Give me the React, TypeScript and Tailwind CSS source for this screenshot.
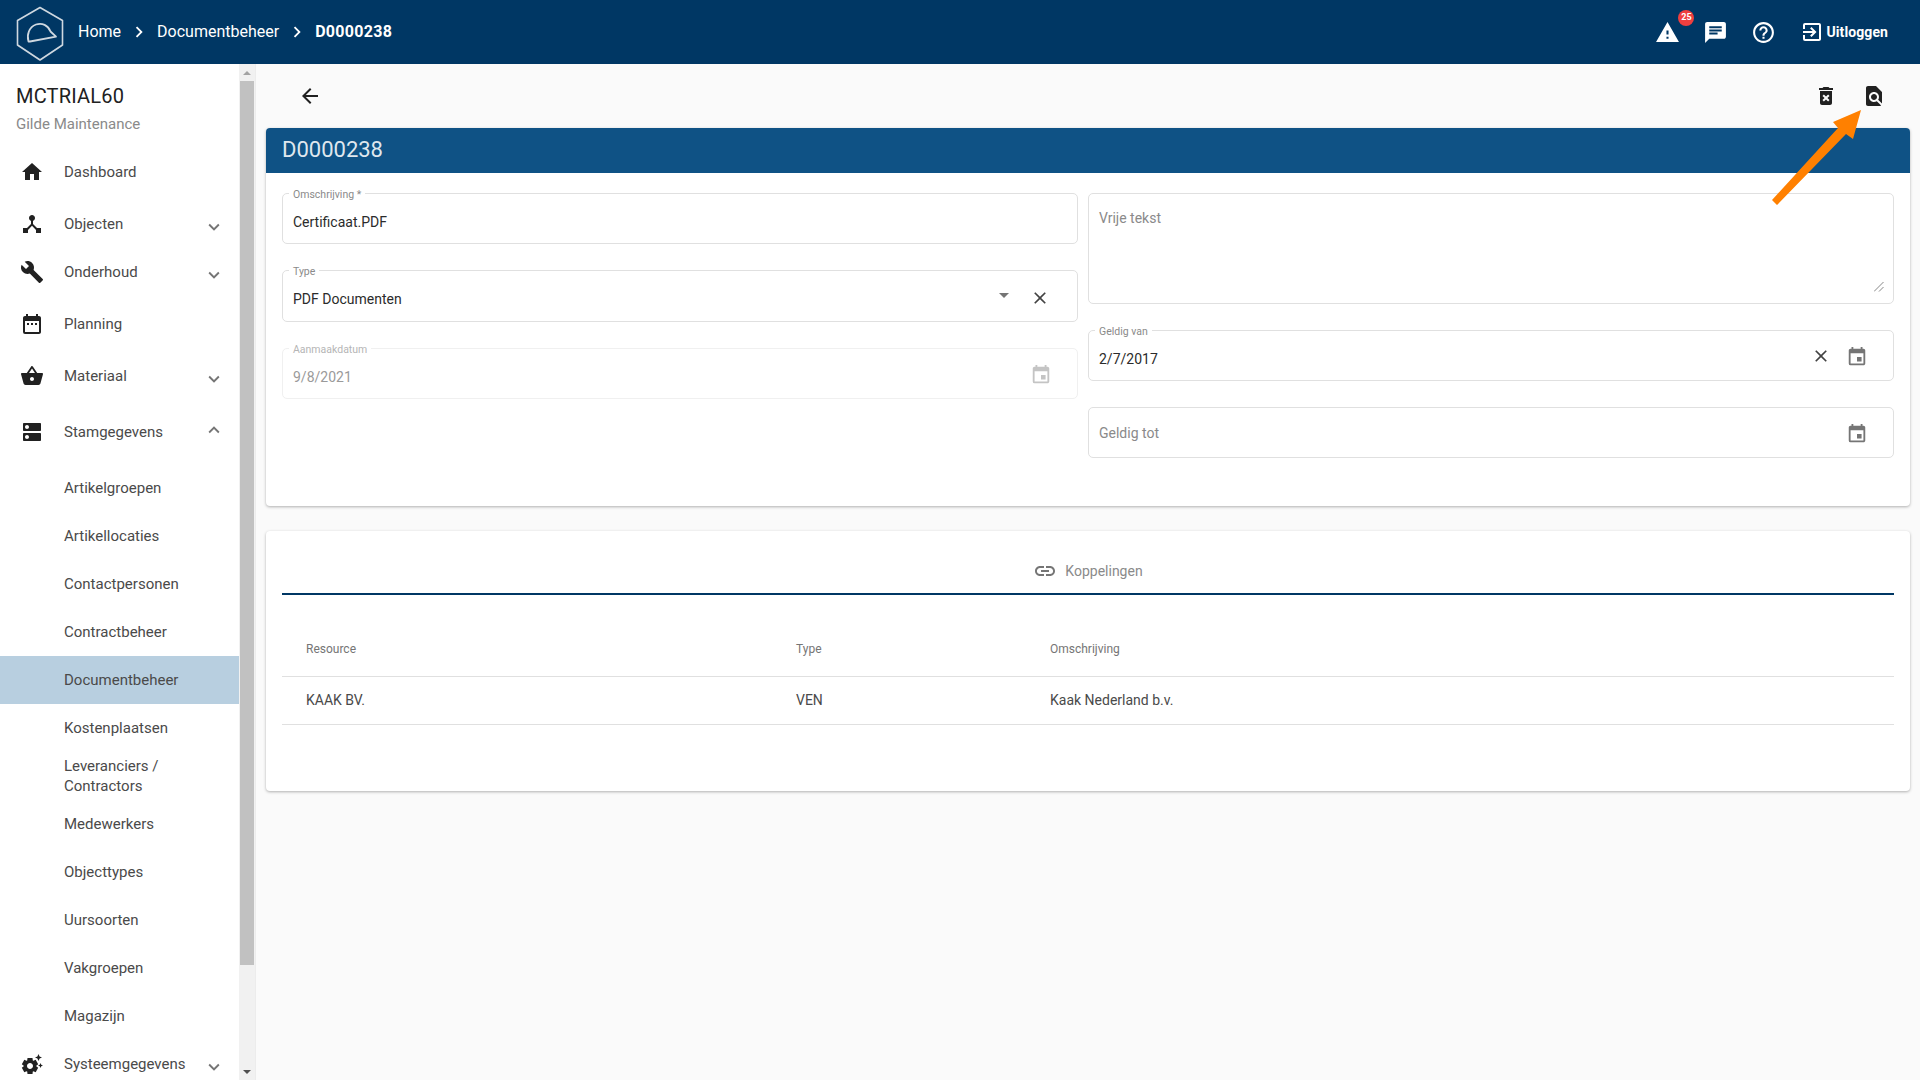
import type { ReactNode } from 'react';
import {
    MdArrowBack,
    MdArrowDropDown,
    MdBuild,
    MdChat,
    MdChevronRight,
    MdClose,
    MdDateRange,
    MdDeleteForever,
    MdDeviceHub,
    MdDns,
    MdEvent,
    MdExitToApp,
    MdExpandLess,
    MdExpandMore,
    MdFindInPage,
    MdHelpOutline,
    MdHome,
    MdLink,
    MdSettingsSuggest,
    MdShoppingBasket,
    MdWarning,
} from 'react-icons/md';

type NavRow = {
    label: ReactNode;
    icon?: ReactNode;
    height: string;
    chevron?: 'up' | 'down';
    active?: boolean;
};

const navRows: NavRow[] = [
    { label: 'Dashboard', icon: <MdHome />, height: 'h-[52px]' },
    { label: 'Objecten', icon: <MdDeviceHub />, height: 'h-[52px]', chevron: 'down' },
    { label: 'Onderhoud', icon: <MdBuild />, height: 'h-[44px]', chevron: 'down' },
    { label: 'Planning', icon: <MdDateRange />, height: 'h-[59px]' },
    { label: 'Materiaal', icon: <MdShoppingBasket />, height: 'h-[46px]', chevron: 'down' },
    { label: 'Stamgegevens', icon: <MdDns />, height: 'h-[65px]', chevron: 'up' },
    { label: 'Artikelgroepen', height: 'h-[48px]' },
    { label: 'Artikellocaties', height: 'h-[48px]' },
    { label: 'Contactpersonen', height: 'h-[48px]' },
    { label: 'Contractbeheer', height: 'h-[48px]' },
    { label: 'Documentbeheer', height: 'h-[48px]', active: true },
    { label: 'Kostenplaatsen', height: 'h-[48px]' },
    {
        label: (
            <>
                Leveranciers /<br />
                Contractors
            </>
        ),
        height: 'h-[48px]',
    },
    { label: 'Medewerkers', height: 'h-[48px]' },
    { label: 'Objecttypes', height: 'h-[48px]' },
    { label: 'Uursoorten', height: 'h-[48px]' },
    { label: 'Vakgroepen', height: 'h-[48px]' },
    { label: 'Magazijn', height: 'h-[48px]' },
    { label: 'Systeemgegevens', icon: <MdSettingsSuggest />, height: 'h-[48px]', chevron: 'down' },
];

function Logo() {
    return (
        <svg width="48" height="60" viewBox="0 0 48 60" fill="none" stroke="#cfd8e0" strokeWidth="1.6">
            <path d="M24 5.5 46.5 18.5V43L24 58 1.5 43V18.5Z" strokeLinejoin="round" />
            <path
                d="M12.5 39.5C10.5 33 13 25 20 22.5c6-2 12 .5 14.5 7l5.5 5.2-26 4.8Z"
                strokeWidth="1.8"
                strokeLinejoin="round"
            />
        </svg>
    );
}

function NavItem({ row }: { row: NavRow }) {
    return (
        <div
            className={`flex shrink-0 items-center text-[15px] leading-[20px] text-[#4a4a4a] ${row.height} ${
                row.active ? 'bg-[#b8cfe0]' : ''
            }`}
        >
            <span className="flex w-[64px] shrink-0 justify-center pr-[1px] text-[24px] text-[#212121]">{row.icon}</span>
            <span className="flex-1">{row.label}</span>
            {row.chevron && (
                <span
                    className={`mr-[14px] text-[22px] text-[#757575] ${row.chevron === 'up' ? 'mb-[4px]' : 'mt-[5px]'}`}
                >
                    {row.chevron === 'up' ? <MdExpandLess /> : <MdExpandMore />}
                </span>
            )}
        </div>
    );
}

function Sidebar() {
    return (
        <aside className="flex w-[256px] shrink-0 overflow-hidden border-r border-[#ececec] bg-white">
            <div className="flex h-[1016px] w-[239px] shrink-0 flex-col overflow-hidden">
                <div className="h-[82px] shrink-0 px-4 pt-[20px]">
                    <div className="text-[20px] leading-[24px] tracking-[0.2px] text-[#212121]">MCTRIAL60</div>
                    <div className="mt-[6px] text-[15px] leading-[20px] text-[#8a8a8a]">Gilde Maintenance</div>
                </div>
                {navRows.map((row, i) => (
                    <NavItem key={i} row={row} />
                ))}
            </div>
            <div className="flex w-[16px] shrink-0 flex-col items-center bg-[#f1f1f1]">
                <div className="flex h-[17px] items-center">
                    <div className="h-0 w-0 border-x-[4px] border-b-[4px] border-x-transparent border-b-[#a3a3a3]" />
                </div>
                <div className="h-[884px] w-[14px] bg-[#c1c1c1]" />
                <div className="flex-1" />
                <div className="flex h-[17px] items-center">
                    <div className="h-0 w-0 border-x-[4px] border-t-[4px] border-x-transparent border-t-[#505050]" />
                </div>
            </div>
        </aside>
    );
}

function Field({
    label,
    floating,
    value,
    disabled,
    className,
    children,
}: {
    label: string;
    floating?: boolean;
    value?: string;
    disabled?: boolean;
    className: string;
    children?: ReactNode;
}) {
    return (
        <div
            className={`relative flex items-center rounded-[5px] border pl-[10px] pr-[25px] text-[14px] ${className} ${
                disabled ? 'border-[#f0f0f0]' : 'border-[#e0e0e0]'
            }`}
        >
            {floating && (
                <span
                    className={`absolute top-[-6px] left-[6px] bg-white px-[4px] text-[10.5px] leading-[13px] ${
                        disabled ? 'text-[#b5b5b5]' : 'text-[#8a8a8a]'
                    }`}
                >
                    {label}
                </span>
            )}
            <span
                className={`flex-1 ${
                    !floating ? 'pt-[1px] text-[#8a8a8a]' : disabled ? 'pt-[7px] text-[#9a9a9a]' : 'pt-[7px] text-[#2b2b2b]'
                }`}
            >
                {floating ? value : label}
            </span>
            {children}
        </div>
    );
}

function Toolbar() {
    return (
        <div className="flex h-[64px] shrink-0 items-center pl-[32px] pr-[24px] text-[24px] text-[#212121]">
            <MdArrowBack />
            <div className="flex-1" />
            <MdDeleteForever />
            <span className="w-[24px]" />
            <MdFindInPage />
        </div>
    );
}

function DocumentCard() {
    return (
        <section className="h-[378px] shrink-0 rounded-[4px] bg-white shadow-[0_1px_3px_rgba(0,0,0,0.3)]">
            <h1 className="flex h-[45px] items-center rounded-t-[4px] bg-[#0f5285] px-4 pb-[2px] text-[22px] font-normal text-[#dfe7ee]">
                D0000238
            </h1>
            <div className="grid grid-cols-[796px_1fr] gap-x-[10px] px-4 pt-[20px]">
                <div className="flex flex-col gap-[26px]">
                    <Field label="Omschrijving *" floating value="Certificaat.PDF" className="h-[51px]" />
                    <Field label="Type" floating value="PDF Documenten" className="h-[52px]">
                        <MdArrowDropDown className="mr-[14px] mb-[2px] text-[24px] text-[#757575]" />
                        <MdClose className="mr-[2px] mt-[3px] text-[20px] text-[#424242]" />
                    </Field>
                    <Field label="Aanmaakdatum" floating value="9/8/2021" disabled className="h-[51px]">
                        <MdEvent className="mt-[2px] text-[22px] text-[#c4c4c4]" />
                    </Field>
                </div>
                <div className="flex flex-col gap-[26px]">
                    <div className="relative h-[111px] rounded-[5px] border border-[#e0e0e0] px-[10px] py-[14px] text-[14px] leading-[20px] text-[#8a8a8a]">
                        Vrije tekst
                        <svg className="absolute right-[9px] bottom-[11px]" width="10" height="10" viewBox="0 0 10 10" stroke="#555" strokeWidth="0.7">
                            <path d="M0 9.5 9.5 0M5 9.5 9.5 5" />
                        </svg>
                    </div>
                    <Field label="Geldig van" floating value="2/7/2017" className="h-[51px]">
                        <MdClose className="mr-[15px] mt-[1px] text-[20px] text-[#424242]" />
                        <MdEvent className="mt-[2px] text-[22px] text-[#757575]" />
                    </Field>
                    <Field label="Geldig tot" className="h-[51px]">
                        <MdEvent className="mt-[2px] text-[22px] text-[#757575]" />
                    </Field>
                </div>
            </div>
        </section>
    );
}

function LinksCard() {
    return (
        <section className="mt-[25px] h-[260px] shrink-0 rounded-[4px] bg-white px-4 pt-[16px] shadow-[0_1px_3px_rgba(0,0,0,0.3)]">
            <div className="flex h-[48px] items-center justify-center gap-[8px] border-b-2 border-[#003764] pt-[2px] text-[14px] text-[#8a8a8a]">
                <MdLink className="text-[24px] text-[#757575]" />
                Koppelingen
            </div>
            <div className="mt-[27px] grid h-[55px] grid-cols-[490px_254px_1fr] items-center border-b border-[#e0e0e0] px-[24px] text-[12px] text-[#757575]">
                <span>Resource</span>
                <span>Type</span>
                <span>Omschrijving</span>
            </div>
            <div className="grid h-[48px] grid-cols-[490px_254px_1fr] items-center border-b border-[#e0e0e0] px-[24px] text-[14px] text-[#4a4a4a]">
                <span>KAAK BV.</span>
                <span>VEN</span>
                <span>Kaak Nederland b.v.</span>
            </div>
        </section>
    );
}

export default function App() {
    return (
        <div className="relative flex h-[1080px] w-[1920px] flex-col overflow-hidden bg-[#fafafa] font-['Roboto',sans-serif]">
            <header className="flex h-[64px] shrink-0 items-center bg-[#003764] pl-[16px] pr-[32px] text-white">
                <Logo />
                <nav className="ml-[14px] flex items-center text-[16px]">
                    <span>Home</span>
                    <span className="flex w-[36px] justify-center text-[22px]">
                        <MdChevronRight />
                    </span>
                    <span>Documentbeheer</span>
                    <span className="flex w-[36px] justify-center text-[22px]">
                        <MdChevronRight />
                    </span>
                    <span className="font-bold tracking-[0.3px]">D0000238</span>
                </nav>
                <div className="flex-1" />
                <div className="relative flex items-center text-[25px]">
                    <MdWarning />
                    <span className="absolute top-[-10px] left-[23px] flex size-[16px] items-center justify-center rounded-full bg-[#ef3f3f] text-[9px] font-bold">
                        25
                    </span>
                </div>
                <MdChat className="ml-[23px] text-[25px]" />
                <MdHelpOutline className="ml-[23px] text-[25px]" />
                <MdExitToApp className="ml-[24px] text-[24px]" />
                <span className="ml-[2px] text-[14px] font-bold tracking-[0.1px]">Uitloggen</span>
            </header>
            <div className="flex min-h-0 flex-1">
                <Sidebar />
                <main className="flex min-w-0 flex-1 flex-col pl-[10px] pr-[10px]">
                    <Toolbar />
                    <DocumentCard />
                    <LinksCard />
                </main>
            </div>
            <svg className="absolute top-[100px] left-[1765px]" width="105" height="110" viewBox="1765 100 105 110" fill="#ff8000">
                <path d="M1772 200 1838 128 1833 122 1861 110 1853 139 1846 134 1777 205Z" />
            </svg>
        </div>
    );
}
